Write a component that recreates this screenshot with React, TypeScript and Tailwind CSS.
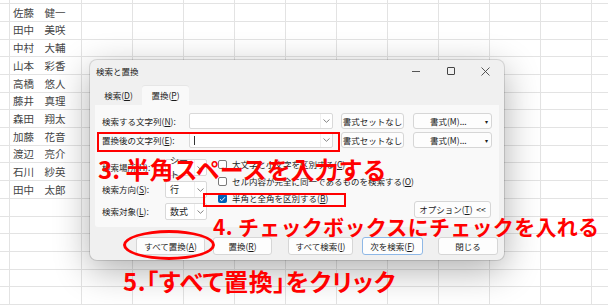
import React from "react";

const names = [
  "佐藤　健一",
  "田中　美咲",
  "中村　大輔",
  "山本　彩香",
  "高橋　悠人",
  "藤井　真理",
  "森田　翔太",
  "加藤　花音",
  "渡辺　亮介",
  "石川　紗英",
  "田中　太郎",
];

const cols = Array.from({ length: 11 });

const SheetRow = ({ text, top }: { text?: string; top?: boolean }) => (
  <div className={`flex ${top ? "h-[4.3px]" : "h-[17.7px]"}`}>
    <div className="w-[10px] shrink-0 border-r border-b border-[#e3e3e3]" />
    <div className="w-[72px] shrink-0 border-r border-b border-[#e3e3e3] pl-[3px] flex items-center text-[10.5px] text-[#454545] whitespace-nowrap">
      {text}
    </div>
    {cols.map((_, i) => (
      <div key={i} className="w-[51px] shrink-0 border-r border-b border-[#e3e3e3]" />
    ))}
  </div>
);

const Chevron = () => (
  <svg width="7" height="4" viewBox="0 0 7 4" fill="none">
    <path d="M0.5 0.5 L3.5 3.3 L6.5 0.5" stroke="#777" strokeWidth="0.9" />
  </svg>
);

const Combo = ({ w, value, cursor }: { w: string; value?: string; cursor?: boolean }) => (
  <div className={`${w} h-full bg-white border border-[#d9d9d9] rounded-[2px] flex items-center`}>
    <div className="flex-1 pl-[4px] flex items-center text-[9px]">
      {cursor && <div className="w-px h-[9px] bg-[#333]" />}
      {value}
    </div>
    <div className="w-[12px] h-full flex items-center justify-center border-l border-[#efefef]">
      <Chevron />
    </div>
  </div>
);

const Btn = ({ w, children, focus }: { w: string; children: React.ReactNode; focus?: boolean }) => (
  <div
    className={`${w} h-full bg-[#fdfdfd] border ${focus ? "border-[#8fb8e6]" : "border-[#d6d6d6]"} rounded-[3px] flex items-center justify-center whitespace-nowrap`}
  >
    {children}
  </div>
);

const U = ({ c }: { c: string }) => <span className="underline underline-offset-1">{c}</span>;

const Check = ({ checked, children }: { checked?: boolean; children: React.ReactNode }) => (
  <div className="h-[17px] flex items-center gap-[5px] whitespace-nowrap">
    {checked ? (
      <div className="w-[9px] h-[9px] rounded-[2px] bg-[#005fb8] flex items-center justify-center">
        <svg width="7" height="6" viewBox="0 0 7 6" fill="none">
          <path d="M1 3.2 L2.7 4.8 L6 1.2" stroke="white" strokeWidth="1" />
        </svg>
      </div>
    ) : (
      <div className="w-[9px] h-[9px] rounded-[2px] border border-[#7a7a7a] bg-white" />
    )}
    <span>{children}</span>
  </div>
);

const FormatBtn = () => (
  <Btn w="w-[79px]">
    <span className="ml-[16px]">書式(M)...</span>
    <span className="ml-auto mr-[3px] text-[6px]">▾</span>
  </Btn>
);

const Dialog = () => (
  <div className="absolute left-[90px] top-[60px] w-[414px] h-[200px] rounded-[7px] bg-[#f0f0f0] shadow-[0_0_0_1px_rgba(0,0,0,0.12),0_10px_36px_rgba(0,0,0,0.32)] flex flex-col text-[8.5px] text-[#1b1b1b] font-['Noto_Sans_CJK_JP',sans-serif]">
    {/* title bar */}
    <div className="h-[22px] flex items-center">
      <span className="pl-[6px] text-[8.5px]">検索と置換</span>
      <div className="ml-auto flex pr-[1px]">
        <div className="w-[35px] h-[22px] flex items-center justify-center">
          <div className="w-[8px] h-px bg-[#555]" />
        </div>
        <div className="w-[35px] h-[22px] flex items-center justify-center">
          <div className="w-[8px] h-[8px] border border-[#444] rounded-[1px]" />
        </div>
        <div className="w-[35px] h-[22px] flex items-center justify-center">
          <svg width="9" height="9" viewBox="0 0 9 9" fill="none">
            <path d="M0.5 0.5 L8.5 8.5 M8.5 0.5 L0.5 8.5" stroke="#444" strokeWidth="0.9" />
          </svg>
        </div>
      </div>
    </div>

    {/* tabs */}
    <div className="mt-[4px] h-[19px] flex pl-[5px]">
      <div className="w-[47px] flex items-center justify-center">
        検索(<U c="D" />)
      </div>
      <div className="w-[47px] flex items-center justify-center bg-[#f9f9f9] rounded-t-[3px] shadow-[0_-1px_0_#e6e6e6]">
        置換(<U c="P" />)
      </div>
    </div>

    {/* panel */}
    <div className="mx-[5px] h-[122px] bg-[#f9f9f9] rounded-b-[3px] pt-[8px] pl-[7px] flex flex-col">
      <div className="h-[16px] flex items-center">
        <div className="w-[87px] whitespace-nowrap">
          検索する文字列(<U c="N" />):
        </div>
        <Combo w="w-[144px]" />
        <div className="ml-[8px] h-full">
          <Btn w="w-[63px]">書式セットなし</Btn>
        </div>
        <div className="ml-[9px] h-full">
          <FormatBtn />
        </div>
      </div>
      <div className="mt-[3px] h-[16px] flex items-center">
        <div className="w-[87px] whitespace-nowrap">
          置換後の文字列(<U c="E" />):
        </div>
        <Combo w="w-[144px]" cursor />
        <div className="ml-[8px] h-full">
          <Btn w="w-[63px]">書式セットなし</Btn>
        </div>
        <div className="ml-[9px] h-full">
          <FormatBtn />
        </div>
      </div>

      {/* options */}
      <div className="mt-[11px] flex">
        <div className="flex flex-col gap-[5px]">
          {[
            ["検索場所", "H", "シート"],
            ["検索方向", "S", "行"],
            ["検索対象", "L", "数式"],
          ].map(([l, k, v]) => (
            <div key={k} className="h-[17px] flex items-center">
              <div className="w-[63px] whitespace-nowrap">
                {l}(<U c={k} />):
              </div>
              <Combo w="w-[42px]" value={v} />
            </div>
          ))}
        </div>
        <div className="ml-[11px] -mt-[3px] flex flex-col">
          <Check>大文字と小文字を区別する(<U c="C" />)</Check>
          <Check>セル内容が完全に同一であるものを検索する(<U c="O" />)</Check>
          <Check checked>半角と全角を区別する(<U c="B" />)</Check>
        </div>
        <div className="ml-auto mr-[8px] self-end mb-[2px] h-[17px]">
          <Btn w="w-[77px]">
            オプション(<U c="T" />)&nbsp;&nbsp;&lt;&lt;
          </Btn>
        </div>
      </div>
    </div>

    {/* bottom buttons */}
    <div className="mt-[10px] h-[18px] flex pl-[46px]">
      <Btn w="w-[69px]">すべて置換(<U c="A" />)</Btn>
      <div className="ml-[8px] h-full">
        <Btn w="w-[59px]">置換(<U c="R" />)</Btn>
      </div>
      <div className="ml-[16px] h-full">
        <Btn w="w-[65px]">すべて検索(<U c="I" />)</Btn>
      </div>
      <div className="ml-[9px] h-full">
        <Btn w="w-[61px]" focus>
          次を検索(<U c="F" />)
        </Btn>
      </div>
      <div className="ml-[15px] h-full">
        <Btn w="w-[60px]">閉じる</Btn>
      </div>
    </div>
  </div>
);

export default function App() {
  return (
    <div className="relative w-[608px] h-[305px] overflow-hidden bg-white font-['Noto_Sans_CJK_JP',sans-serif]">
      {/* spreadsheet */}
      <div className="flex flex-col">
        <SheetRow top />
        {Array.from({ length: 17 }).map((_, i) => (
          <SheetRow key={i} text={names[i]} />
        ))}
      </div>

      <Dialog />

      {/* annotations */}
      <div className="absolute left-[97px] top-[132px] w-[243px] h-[20px] border-2 border-[#ff0000]" />
      <div className="absolute left-[203px] top-[193px] w-[143px] h-[14px] border-2 border-[#ff0000]" />
      <div className="absolute left-[123px] top-[230px] w-[92px] h-[30px] rounded-[50%] border-[3px] border-[#ff0000]" />

      <div className="absolute left-[98px] top-[157px] text-[24px] leading-none font-bold text-[#ff0000] whitespace-nowrap">
        3. 半角スペースを入力する
      </div>
      <div className="absolute left-[213px] top-[216px] text-[21px] leading-none font-bold text-[#ff0000] whitespace-nowrap tracking-[0.3px]">
        4. チェックボックスにチェックを入れる
      </div>
      <div className="absolute left-[123px] top-[269px] text-[24px] leading-none font-bold text-[#ff0000] whitespace-nowrap [font-feature-settings:'palt'] tracking-[0.6px]">
        5.「すべて置換」をクリック
      </div>
    </div>
  );
}
